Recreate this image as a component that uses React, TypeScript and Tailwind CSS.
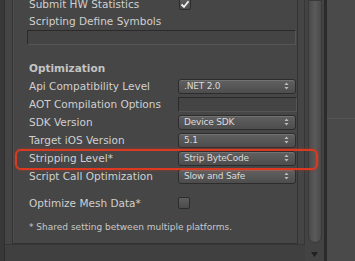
import React from "react";

const font = { fontFamily: '"DejaVu Sans", "Liberation Sans", sans-serif' };

function Arrows() {
  return (
    <svg width="5" height="8" viewBox="0 0 5 8" className="shrink-0">
      <path d="M2.5 0.5 L4.5 3 L0.5 3 Z" fill="#bdbdbd" />
      <path d="M2.5 7.5 L4.5 5 L0.5 5 Z" fill="#bdbdbd" />
    </svg>
  );
}

function Dropdown({ value }: { value: string }) {
  return (
    <div className="flex h-[15px] w-[118px] items-center justify-between rounded-[3px] border border-[#2c2c2c] bg-gradient-to-b from-[#606060] to-[#4d4d4d] pl-[5px] pr-[6px] shadow-[inset_0_1px_0_rgba(255,255,255,0.12)]">
      <span className="text-[9px] leading-none tracking-[-0.2px] text-[#dadada]">{value}</span>
      <Arrows />
    </div>
  );
}

function Row({ label, children }: { label: string; children?: React.ReactNode }) {
  return (
    <div className="flex h-[18px] items-center">
      <div className="w-[165px] shrink-0 pl-[16px] text-[10.5px] leading-none text-[#d0d0d0]">{label}</div>
      {children}
    </div>
  );
}

function Check({ checked }: { checked?: boolean }) {
  return (
    <div className="flex h-[12px] w-[12px] items-center justify-center rounded-[2px] border border-[#2c2c2c] bg-gradient-to-b from-[#5e5e5e] to-[#4b4b4b]">
      {checked && (
        <svg width="10" height="9" viewBox="0 0 10 9">
          <path d="M1.5 4.5 L4 7 L8.5 1.2" stroke="#f2f2f2" strokeWidth="1.8" fill="none" />
        </svg>
      )}
    </div>
  );
}

export default function App() {
  return (
    <div className="flex h-[261px] w-[355px] overflow-hidden bg-[#454545]" style={font}>
      {/* left dark strip */}
      <div className="w-[4px] shrink-0 bg-[#383838]" />
      {/* main column */}
      <div className="flex w-[301px] shrink-0 flex-col border-l border-[#2f2f2f]">
        <div className="flex h-[245px] shrink-0 flex-col border-b border-r border-[#363636] pl-[7px] pr-[6px]">
          <div className="relative flex flex-1 flex-col border-b border-l border-r border-[#333333] bg-[#464646] pb-[1px] shadow-[inset_1px_0_0_rgba(255,255,255,0.05)]">
            <div className="-mt-[5px] flex flex-col">
              <Row label="Submit HW Statistics">
                <div className="pl-[1px]">
                  <Check checked />
                </div>
              </Row>
              <div className="flex h-[16px] items-center pl-[16px] text-[10.5px] leading-none text-[#d0d0d0]">
                Scripting Define Symbols
              </div>
              <div className="ml-[14px] mr-[1px] mt-[1px] h-[15px] border border-[#2a2a2a] border-b-[#555555] border-r-[#555555] bg-[#444444]" />
              <div className="mt-[14px] flex h-[18px] items-center pl-[16px] text-[10.5px] font-bold leading-none text-[#c4c4c4]">
                Optimization
              </div>
              <Row label="Api Compatibility Level">
                <Dropdown value=".NET 2.0" />
              </Row>
              <Row label="AOT Compilation Options">
                <div className="h-[15px] w-[120px] border border-[#2a2a2a] border-b-[#555555] border-r-[#555555] bg-[#444444]" />
              </Row>
              <Row label="SDK Version">
                <Dropdown value="Device SDK" />
              </Row>
              <Row label="Target iOS Version">
                <Dropdown value="5.1" />
              </Row>
              <Row label="Stripping Level*">
                <Dropdown value="Strip ByteCode" />
              </Row>
              <Row label="Script Call Optimization">
                <Dropdown value="Slow and Safe" />
              </Row>
              <div className="mt-[9px]">
                <Row label="Optimize Mesh Data*">
                  <Check />
                </Row>
              </div>
              <div className="mt-[6px] flex h-[18px] items-center pl-[16px] text-[9px] leading-none text-[#c8c8c8]">
                * Shared setting between multiple platforms.
              </div>
            </div>
            {/* red highlight */}
            <div className="pointer-events-none absolute left-[2px] top-[149px] h-[21px] w-[303px] rounded-[6px] border-[2.5px] border-[#dc3a20] shadow-[0_0_3px_rgba(220,50,30,0.6)]" />
          </div>
        </div>
        <div className="flex-1 bg-[#404040]" />
      </div>
      {/* scrollbar */}
      <div className="flex w-[19px] shrink-0 flex-col items-center bg-[#434343]">
        <div className="h-[243px] w-[14px] rounded-b-[7px] border border-[#393939] bg-gradient-to-r from-[#4a4a4a] via-[#5a5a5a] to-[#4a4a4a]" />
        <svg width="7" height="6" viewBox="0 0 7 6" className="mt-[9px]">
          <path d="M0 0 L7 0 L3.5 5 Z" fill="#222222" />
        </svg>
      </div>
      <div className="w-[3px] shrink-0 bg-[#2b2b2b]" />
      <div className="flex flex-1 flex-col bg-[#4a4a4a]">
        <div className="h-[118px]" />
        <div className="h-[1px] bg-[#545454]" />
      </div>
    </div>
  );
}
